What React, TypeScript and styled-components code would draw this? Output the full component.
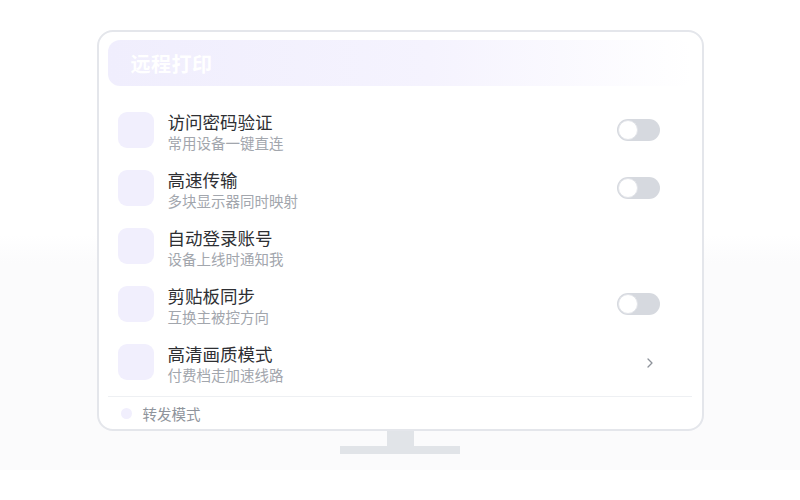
import React from 'react'
import styled, { createGlobalStyle } from 'styled-components'

const GlobalStyle = createGlobalStyle`
  body {
    margin: 0;
    background: #ffffff;
    font-family: "Noto Sans CJK SC", "Noto Sans", sans-serif;
  }
`

type Item = {
  title: string
  sub: string
  action: 'toggle' | 'chevron' | 'none'
}

const items: Item[] = [
  { title: '访问密码验证', sub: '常用设备一键直连', action: 'toggle' },
  { title: '高速传输', sub: '多块显示器同时映射', action: 'toggle' },
  { title: '自动登录账号', sub: '设备上线时通知我', action: 'none' },
  { title: '剪贴板同步', sub: '互换主被控方向', action: 'toggle' },
  { title: '高清画质模式', sub: '付费档走加速线路', action: 'chevron' },
]

const App = () => {
  return (
    <>
      <GlobalStyle />
      <Page>
        <Screen>
          <Header>
            <HeaderTitle>远程打印</HeaderTitle>
          </Header>
          <List>
            {items.map((it) => (
              <Row key={it.title}>
                <IconBox />
                <Texts>
                  <RowTitle>{it.title}</RowTitle>
                  <RowSub>{it.sub}</RowSub>
                </Texts>
                {it.action === 'toggle' && (
                  <Toggle>
                    <Knob />
                  </Toggle>
                )}
                {it.action === 'chevron' && (
                  <Chevron width="6" height="10" viewBox="0 0 6 10">
                    <path d="M1 1 L5 5 L1 9" fill="none" stroke="#8d929a" strokeWidth="1.3" strokeLinecap="round" strokeLinejoin="round" />
                  </Chevron>
                )}
              </Row>
            ))}
          </List>
          <Footer>
            <Dot />
            <FooterText>转发模式</FooterText>
          </Footer>
        </Screen>
        <Neck />
        <Base />
      </Page>
    </>
  )
}

export default App

const Page = styled.div`
  height: 470px;
  display: flex;
  flex-direction: column;
  align-items: center;
  padding-top: 30px;
  box-sizing: border-box;
  background: linear-gradient(180deg, #ffffff 0%, #ffffff 50%, #fbfbfc 56%, #fbfbfc 100%);
`

const Screen = styled.div`
  width: 607px;
  height: 401px;
  flex-shrink: 0;
  box-sizing: border-box;
  border: 2px solid #e4e6eb;
  border-radius: 16px;
  background: #ffffff;
  padding: 8px 10px 0 9px;
  display: flex;
  flex-direction: column;
`

const Header = styled.div`
  height: 46px;
  flex-shrink: 0;
  border-radius: 12px;
  background: linear-gradient(90deg, #f0eefd 0%, #f5f3fe 55%, #ffffff 100%);
  display: flex;
  align-items: center;
  padding-left: 23px;
`

const HeaderTitle = styled.div`
  color: #ffffff;
  font-size: 20px;
  font-weight: 700;
  letter-spacing: 0.5px;
`

const List = styled.div`
  display: flex;
  flex-direction: column;
  gap: 22px;
  padding: 26px 0 16px 0;
`

const Row = styled.div`
  height: 36px;
  display: flex;
  align-items: flex-start;
  padding-left: 10px;
  padding-right: 32px;
`

const IconBox = styled.div`
  width: 36px;
  height: 36px;
  border-radius: 9px;
  background: #f1effd;
  flex-shrink: 0;
`

const Texts = styled.div`
  flex: 1;
  margin-left: 14px;
  display: flex;
  flex-direction: column;
  margin-top: -2px;
`

const RowTitle = styled.div`
  font-size: 17.5px;
  line-height: 23px;
  color: #2e2f33;
`

const RowSub = styled.div`
  font-size: 14.5px;
  line-height: 19px;
  color: #a2a6ad;
`

const Toggle = styled.div`
  width: 43px;
  height: 22px;
  border-radius: 11px;
  background: #d6d9df;
  margin-top: 7px;
  position: relative;
`

const Knob = styled.div`
  position: absolute;
  left: 1px;
  top: 1px;
  width: 20px;
  height: 20px;
  box-sizing: border-box;
  border-radius: 50%;
  background: #ffffff;
  border: 1px solid #e2e4e9;
`

const Chevron = styled.svg`
  margin-top: 14px;
  margin-right: 7px;
`

const Footer = styled.div`
  flex: 1;
  border-top: 1px solid #eef0f3;
  display: flex;
  align-items: center;
  padding-left: 13px;
  gap: 11px;
`

const Dot = styled.div`
  width: 11px;
  height: 11px;
  border-radius: 50%;
  background: #f1effd;
`

const FooterText = styled.div`
  font-size: 14.5px;
  color: #8f949c;
`

const Neck = styled.div`
  width: 27px;
  height: 15px;
  background: #e1e4e8;
`

const Base = styled.div`
  width: 120px;
  height: 8px;
  background: #e1e4e8;
`
